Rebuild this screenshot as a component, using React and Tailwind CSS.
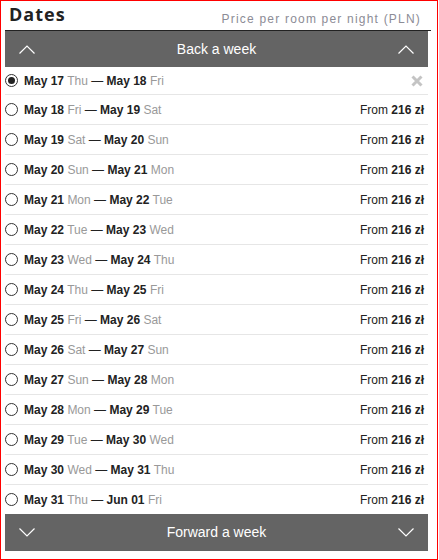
const days = ["Thu", "Fri", "Sat", "Sun", "Mon", "Tue", "Wed"];

// builds the list of night ranges starting May 17 (Thu)
const rows = Array.from({ length: 15 }, (_, i) => {
  const d1 = 17 + i;
  const d2 = d1 + 1;
  const fmt = (d) => (d > 31 ? `Jun ${String(d - 31).padStart(2, "0")}` : `May ${d}`);
  return {
    from: fmt(d1),
    fromDay: days[i % 7],
    to: fmt(d2),
    toDay: days[(i + 1) % 7],
  };
});

function Chevron({ up }) {
  return (
    <svg width="16" height="9" viewBox="0 0 16 9" className="block">
      <polyline
        points={up ? "0.5,8.5 8,1 15.5,8.5" : "0.5,0.5 8,8 15.5,0.5"}
        fill="none"
        stroke="#fff"
        strokeWidth="1.2"
      />
    </svg>
  );
}

function WeekBar({ label, up, className }) {
  return (
    <div className={`flex items-center justify-between bg-[#646464] px-[14px] text-[14px] text-white ${className}`}>
      <Chevron up={up} />
      <span>{label}</span>
      <Chevron up={up} />
    </div>
  );
}

function Radio({ checked }) {
  return (
    <span className="flex h-[13px] w-[13px] shrink-0 items-center justify-center rounded-full border border-[#333] bg-white">
      {checked && <span className="h-[7px] w-[7px] rounded-full bg-[#222]" />}
    </span>
  );
}

export default function App() {
  return (
    <div className="h-[560px] w-[438px] border border-[#ff0000] bg-white font-['Liberation_Sans',Arial,sans-serif]">
      <div className="pl-[4px]">
        <div className="flex h-[30px] w-[426px] items-start justify-between border-b border-[#222]">
          <h1 className="pl-[4px] pt-[1px] font-['Open_Sans',sans-serif] text-[18px] font-bold leading-[24px] tracking-[1px] text-[#222]">
            Dates
          </h1>
          <span className="pr-[10px] pt-[11px] text-[12px] leading-[14px] tracking-[1.2px] text-[#8c8c96]">
            Price per room per night (PLN)
          </span>
        </div>

        <div className="w-[423px]">
          <WeekBar label="Back a week" up className="h-[36px]" />

          {rows.map((r, i) => (
            <div
              key={i}
              className={`flex items-center justify-between pr-[4px] text-[12px] text-[#222] ${
                i === 0 ? "h-[28px]" : i === rows.length - 1 ? "h-[29px]" : "h-[30px] "
              } ${i < rows.length - 1 ? "border-b border-[#e6e6e6]" : ""}`}
            >
              <div className="flex items-center gap-[6px]">
                <Radio checked={i === 0} />
                <span>
                  <b>{r.from}</b> <span className="text-[#999]">{r.fromDay}</span> — <b>{r.to}</b>{" "}
                  <span className="text-[#999]">{r.toDay}</span>
                </span>
              </div>
              {i === 0 ? (
                <svg width="12" height="12" viewBox="0 0 12 12" className="mr-[1px]">
                  <path d="M1.5 1.5 L10.5 10.5 M10.5 1.5 L1.5 10.5" stroke="#c4c4c4" strokeWidth="3" />
                </svg>
              ) : (
                <span>
                  From <b>216 zł</b>
                </span>
              )}
            </div>
          ))}

          <WeekBar label="Forward a week" className="h-[37px]" />
        </div>
      </div>
    </div>
  );
}
